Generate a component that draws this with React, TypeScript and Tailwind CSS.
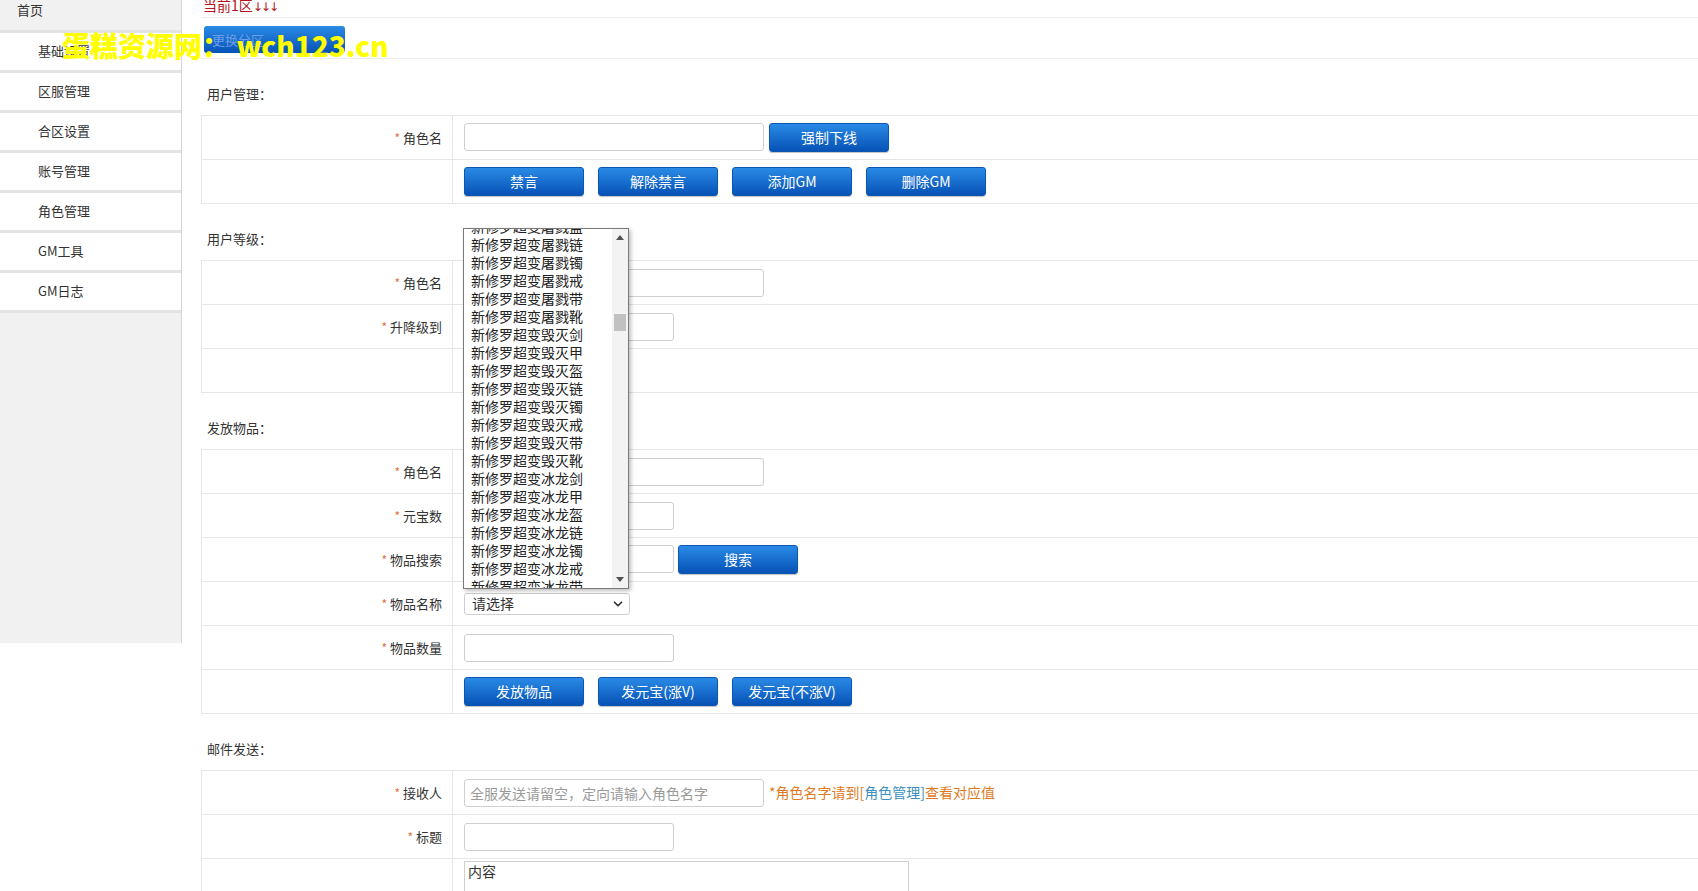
import { ChevronDown } from "lucide-react";

const menu = ["基础设置", "区服管理", "合区设置", "账号管理", "角色管理", "GM工具", "GM日志"];

const items = [
  "屠戮盔", "屠戮链", "屠戮镯", "屠戮戒", "屠戮带", "屠戮靴",
  "毁灭剑", "毁灭甲", "毁灭盔", "毁灭链", "毁灭镯", "毁灭戒", "毁灭带", "毁灭靴",
  "冰龙剑", "冰龙甲", "冰龙盔", "冰龙链", "冰龙镯", "冰龙戒", "冰龙带",
];

function Btn({ children, className = "" }: { children: React.ReactNode; className?: string }) {
  return (
    <button className={`h-[29px] w-[120px] rounded-[3px] border border-[#0a56b0] bg-gradient-to-b from-[#2a8ae6] to-[#0752b6] text-[14px] text-white shadow-[0_1px_1px_rgba(0,0,0,0.25)] ${className}`}>
      {children}
    </button>
  );
}

function Input({ w, placeholder }: { w: string; placeholder?: string }) {
  return (
    <input
      placeholder={placeholder}
      className={`h-[28px] ${w} rounded-[3px] border border-[#cfcfcf] bg-white px-[5px] text-[14px] text-[#333] placeholder:text-[#9a9a9a] outline-none`}
    />
  );
}

function Row({ label, children }: { label?: string; children?: React.ReactNode }) {
  return (
    <div className="flex h-[44px] border-b border-[#e6e6e6]">
      <div className="flex w-[251px] shrink-0 items-center justify-end border-r border-[#e6e6e6] pr-[10px] text-[13px] text-[#333]">
        {label && (
          <>
            <span className="mr-[3px] text-[12px] text-[#e0703a]">*</span>
            {label}
          </>
        )}
      </div>
      <div className="flex flex-1 items-center gap-[14px] pl-[11px]">{children}</div>
    </div>
  );
}

function Section({ title, children }: { title: string; children: React.ReactNode }) {
  return (
    <div>
      <div className="pl-[6px] pt-[24px] pb-[11px] text-[13px] leading-[21px] text-[#333]">{title}</div>
      <div className="border-l border-t border-[#e6e6e6]">{children}</div>
    </div>
  );
}

export default function App() {
  return (
    <div className="relative flex min-h-[891px] bg-white font-['Noto_Sans_CJK_SC',sans-serif] text-[#333]">
      {/* sidebar */}
      <aside className="h-[643px] w-[182px] shrink-0 border-r border-[#d6d6d6] bg-[#f1f1f1] text-[13px]">
        <div className="h-[30px] pl-[17px] leading-[20px]">首页</div>
        {menu.map((m) => (
          <div key={m} className="h-[40px] border-t-[3px] border-[#e4e4e4] bg-white pl-[38px] leading-[35px]">
            {m}
          </div>
        ))}
        <div className="border-t-[3px] border-[#e4e4e4]" />
      </aside>

      {/* main */}
      <main className="flex-1 pl-[19px]">
        <div className="h-[18px] border-b border-[#ececec] pl-[2px] text-[14px] leading-[10px] text-[#b3121b]">
          当前1区<span className="font-['DejaVu_Sans',sans-serif] text-[12px] tracking-[-2px]">↓↓↓</span>
        </div>
        <div className="h-[41px] border-b border-[#ececec] pt-[8px] pl-[3px]">
          <button className="h-[27px] w-[141px] rounded-[3px] bg-gradient-to-b from-[#2a8ae6] to-[#0752b6] pl-[8px] text-left text-[13px] text-[#6d9ee6]">
            更换分区
          </button>
        </div>

        <Section title="用户管理：">
          <Row label="角色名">
            <div className="flex gap-[5px]">
              <Input w="w-[300px]" />
              <Btn>强制下线</Btn>
            </div>
          </Row>
          <Row>
            <Btn>禁言</Btn>
            <Btn>解除禁言</Btn>
            <Btn>添加GM</Btn>
            <Btn>删除GM</Btn>
          </Row>
        </Section>

        <Section title="用户等级：">
          <Row label="角色名">
            <Input w="w-[300px]" />
          </Row>
          <Row label="升降级到">
            <Input w="w-[210px]" />
          </Row>
          <Row>
            <Btn>修改等级</Btn>
          </Row>
        </Section>

        <Section title="发放物品：">
          <Row label="角色名">
            <Input w="w-[300px]" />
          </Row>
          <Row label="元宝数">
            <Input w="w-[210px]" />
          </Row>
          <Row label="物品搜索">
            <div className="flex gap-[4px]">
              <Input w="w-[210px]" />
              <Btn>搜索</Btn>
            </div>
          </Row>
          <Row label="物品名称">
            <div className="flex h-[22px] w-[166px] items-center justify-between rounded-[3px] border border-[#cfcfcf] pl-[7px] pr-[4px] text-[14px] text-[#333]">
              <span>请选择</span>
              <ChevronDown size={14} strokeWidth={3} className="text-[#333]" />
            </div>
          </Row>
          <Row label="物品数量">
            <Input w="w-[210px]" />
          </Row>
          <Row>
            <Btn>发放物品</Btn>
            <Btn>发元宝(涨V)</Btn>
            <Btn>发元宝(不涨V)</Btn>
          </Row>
        </Section>

        <Section title="邮件发送：">
          <Row label="接收人">
            <div className="flex items-center gap-[5px]">
              <Input w="w-[300px]" placeholder="全服发送请留空，定向请输入角色名字" />
              <span className="text-[14px] text-[#e07a22]">
                *角色名字请到[<span className="text-[#3b8fbf]">角色管理]</span>查看对应值
              </span>
            </div>
          </Row>
          <Row label="标题">
            <Input w="w-[210px]" />
          </Row>
          <div className="flex h-[140px]">
            <div className="w-[251px] shrink-0 border-r border-[#e6e6e6]" />
            <div className="pl-[11px] pt-[2px]">
              <textarea
                defaultValue="内容"
                className="h-[130px] w-[445px] resize-none border border-[#cfcfcf] px-[3px] text-[14px] leading-[18px] text-[#333] outline-none"
              />
            </div>
          </div>
        </Section>
      </main>

      {/* open select list */}
      <div className="absolute left-[463px] top-[228px] flex h-[361px] w-[166px] border border-[#7a7a7a] bg-white shadow-[2px_2px_4px_rgba(0,0,0,0.25)]">
        <div className="flex-1 overflow-hidden">
          <div className="-mt-[12px]">
            {items.map((it) => (
              <div key={it} className="h-[18px] whitespace-nowrap pl-[7px] text-[14px] leading-[18px] text-[#222]">
                新修罗超变{it}
              </div>
            ))}
          </div>
        </div>
        <div className="relative w-[16px] bg-[#f3f3f3]">
          <svg className="absolute left-[4px] top-[6px]" width="8" height="5" viewBox="0 0 8 5">
            <path d="M4 0L8 5H0z" fill="#505050" />
          </svg>
          <div className="absolute left-[2px] top-[85px] h-[17px] w-[12px] bg-[#c1c1c1]" />
          <svg className="absolute bottom-[6px] left-[4px]" width="8" height="5" viewBox="0 0 8 5">
            <path d="M0 0H8L4 5z" fill="#505050" />
          </svg>
        </div>
      </div>

      {/* watermark */}
      <div className="absolute left-[62px] top-[26px] whitespace-nowrap text-[28px] font-black leading-[38px] text-[#ffff00]">
        蛋糕资源网： wch123.cn
      </div>
    </div>
  );
}
